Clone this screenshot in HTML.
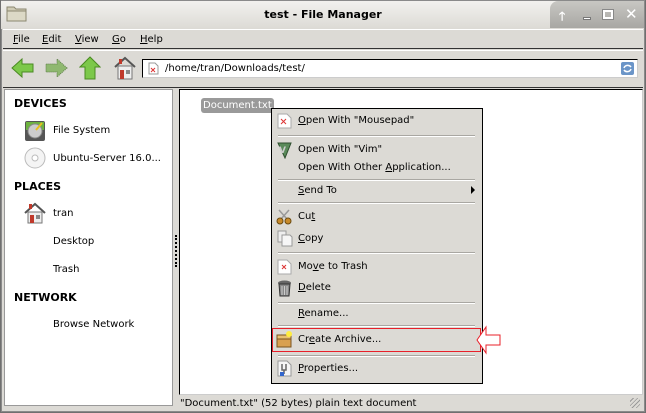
<!DOCTYPE html>
<html><head><style>
*{margin:0;padding:0;box-sizing:border-box}
body{width:646px;height:413px;background:#6f6f6f;font-family:"DejaVu Sans","Liberation Sans",sans-serif;font-size:10px;color:#000;position:relative;overflow:hidden}
.a{position:absolute}
u{text-decoration:underline}
.win{left:1px;top:0;width:644px;height:412px;background:#dcdad5;border:1px solid #8a8a8a}
.title{left:1px;top:1px;width:643px;height:28px;background:linear-gradient(#f2f1ee,#dcdad5)}
.sep{left:278px;width:197px;height:2px;border-top:1px solid #a9a7a2;border-bottom:1px solid #fff}
.it{left:298px;white-space:nowrap}
</style></head><body>
<div class="a win"></div>
<div class="a title"></div>
<svg class="a" style="left:6px;top:4px" width="22" height="18"><path d="M1 3h7l2 2h10v12H1z" fill="#cfcbb5" stroke="#8b8770"/><path d="M1 7h19v10H1z" fill="#dcd9c6" stroke="#8b8770"/></svg>
<div class="a" style="left:0;width:646px;top:8px;text-align:center;font-weight:bold;font-size:11px">test - File Manager</div>
<div class="a" style="left:550px;top:1px;width:94px;height:27px;background:linear-gradient(#c8c7c3,#a8a7a3);border-radius:8px 0 0 0"></div>
<div class="a" style="left:559px;top:7px;font-size:12px;font-weight:bold;color:#fff">🡑</div>
<div class="a" style="left:583px;top:17px;width:8px;height:3px;background:#fff;border:1px solid #777"></div>
<div class="a" style="left:603px;top:10px;width:10px;height:9px;border:2px solid #fff;outline:1px solid #888"></div>
<div class="a" style="left:625px;top:5px;font-size:15px;color:#fff">✕</div>
<div class="a" style="left:3px;top:29px;width:640px;height:20px;border-top:1px solid #fff;border-bottom:1px solid #333"></div>
<div class="a" style="left:13px;top:34px"><u>F</u>ile</div>
<div class="a" style="left:42px;top:34px"><u>E</u>dit</div>
<div class="a" style="left:75px;top:34px"><u>V</u>iew</div>
<div class="a" style="left:112px;top:34px"><u>G</u>o</div>
<div class="a" style="left:140px;top:34px"><u>H</u>elp</div>
<div class="a" style="left:3px;top:50px;width:640px;height:38px;border-top:1px solid #fff;border-bottom:1px solid #333"></div>
<svg class="a" style="left:11px;top:57px" width="24" height="22"><path d="M1 11L11 2v5h11v8H11v5z" fill="#7cc84a" stroke="#4a8a22"/></svg>
<svg class="a" style="left:44px;top:57px" width="24" height="22"><path d="M23 11L13 2v5H2v8h11v5z" fill="#8fb870" stroke="#5f7f4a" stroke-dasharray="1 1"/></svg>
<svg class="a" style="left:79px;top:56px" width="22" height="24"><path d="M11 1L1 11h5v12h10V11h5z" fill="#7cc84a" stroke="#4a8a22"/></svg>
<svg class="a" style="left:113px;top:56px" width="24" height="24"><path d="M2 11L12 2l10 9" fill="none" stroke="#555" stroke-width="2"/><path d="M5 10h14v13H5z" fill="#eee" stroke="#777"/><rect x="7" y="14" width="4" height="9" fill="#c0392b"/><rect x="13" y="14" width="4" height="4" fill="#888"/><rect x="6" y="3" width="3" height="5" fill="#c0392b"/></svg>
<div class="a" style="left:142px;top:59px;width:496px;height:19px;background:#fff;border:1px solid #000;border-bottom-color:#ccc;border-right-color:#ccc"></div>
<svg class="a" style="left:148px;top:62px" width="11" height="13"><path d="M1 1h6l3 3v8H1z" fill="#fff" stroke="#999"/><path d="M3 6l4 4M7 6l-4 4" stroke="#d33"/></svg>
<div class="a" style="left:165px;top:63px">/home/tran/Downloads/test/</div>
<svg class="a" style="left:621px;top:62px" width="13" height="13"><rect x="0" y="0" width="13" height="13" rx="2" fill="#6b95c8"/><path d="M3 6a4 4 0 0 1 7-1M10 7a4 4 0 0 1-7 1" stroke="#fff" fill="none" stroke-width="1.5"/></svg>
<div class="a" style="left:4px;top:89px;width:169px;height:317px;background:#fff;border:1px solid #999"></div>
<div class="a" style="left:14px;top:97px;font-weight:bold;font-size:11px">DEVICES</div>
<svg class="a" style="left:24px;top:120px" width="22" height="22"><rect x="1" y="1" width="20" height="20" rx="2" fill="#555"/><rect x="2" y="2" width="18" height="8" fill="#6db33f"/><circle cx="11" cy="11" r="7" fill="#ccc" stroke="#888"/><path d="M12 10l6-7" stroke="#e8c020" stroke-width="2"/></svg>
<div class="a" style="left:53px;top:125px">File System</div>
<svg class="a" style="left:24px;top:147px" width="22" height="22"><circle cx="11" cy="11" r="10" fill="#f4f4f4" stroke="#bbb"/><circle cx="11" cy="11" r="3" fill="#fff" stroke="#bbb"/></svg>
<div class="a" style="left:53px;top:153px">Ubuntu-Server 16.0...</div>
<div class="a" style="left:14px;top:180px;font-weight:bold;font-size:11px">PLACES</div>
<svg class="a" style="left:24px;top:202px" width="22" height="22"><path d="M1 11L11 2l10 9" fill="none" stroke="#555" stroke-width="2"/><path d="M4 10h14v11H4z" fill="#eee" stroke="#777"/><rect x="6" y="13" width="4" height="8" fill="#c0392b"/><rect x="12" y="13" width="4" height="4" fill="#888"/><rect x="5" y="2" width="3" height="5" fill="#c0392b"/></svg>
<div class="a" style="left:53px;top:208px">tran</div>
<div class="a" style="left:53px;top:236px">Desktop</div>
<div class="a" style="left:53px;top:264px">Trash</div>
<div class="a" style="left:14px;top:291px;font-weight:bold;font-size:11px">NETWORK</div>
<div class="a" style="left:53px;top:319px">Browse Network</div>
<div class="a" style="left:175px;top:235px;width:2px;height:32px;border-left:2px dotted #000"></div>
<div class="a" style="left:179px;top:89px;width:464px;height:306px;background:#fff;border:1px solid #000;border-right-color:#ccc;border-bottom-color:#ccc"></div>
<div class="a" style="left:201px;top:98px;padding:0 2px;height:15px;background:#9a9a9a;color:#fff;border-radius:3px;line-height:15px">Document.txt</div>
<div class="a" style="left:180px;top:398px">"Document.txt" (52 bytes) plain text document</div>
<div class="a" style="left:630px;top:398px;width:10px;height:10px;background:repeating-linear-gradient(135deg,transparent 0 2px,#999 2px 3px)"></div>
<div class="a" style="left:271px;top:108px;width:212px;height:276px;background:#dcdad5;border:1px solid #000"></div>
<svg class="a" style="left:277px;top:113px" width="15" height="16"><path d="M1 1h9l4 4v10H1z" fill="#fff" stroke="#aaa"/><path d="M4 6l5 5M9 6l-5 5" stroke="#d33"/></svg>
<div class="a it" style="top:115px"><u>O</u>pen With "Mousepad"</div>
<div class="a sep" style="top:135px"></div>
<svg class="a" style="left:276px;top:142px" width="17" height="17"><path d="M2 1h13L9 16z" fill="#5a8a5a" stroke="#2f4f2f"/><text x="3" y="11" font-size="9" fill="#ccc" font-weight="bold">V</text></svg>
<div class="a it" style="top:144px">Open With "Vim"</div>
<div class="a it" style="top:162px">Open With Other <u>A</u>pplication...</div>
<div class="a sep" style="top:179px"></div>
<div class="a it" style="top:185px"><u>S</u>end To</div>
<div class="a" style="left:471px;top:186px;width:0;height:0;border-left:4px solid #000;border-top:4px solid transparent;border-bottom:4px solid transparent"></div>
<div class="a sep" style="top:202px"></div>
<svg class="a" style="left:276px;top:209px" width="16" height="16"><path d="M3 1l8 9M13 1L5 10" stroke="#999" stroke-width="1.5"/><circle cx="4" cy="12" r="3" fill="#c88a2a" stroke="#6b4a10"/><circle cx="12" cy="12" r="3" fill="#c88a2a" stroke="#6b4a10"/></svg>
<div class="a it" style="top:211px">Cu<u>t</u></div>
<svg class="a" style="left:277px;top:230px" width="16" height="17"><path d="M1 1h8v11H1z" fill="#eee" stroke="#999"/><path d="M5 5h8l2 2v9H5z" fill="#f6f6f6" stroke="#999"/></svg>
<div class="a it" style="top:233px"><u>C</u>opy</div>
<div class="a sep" style="top:252px"></div>
<svg class="a" style="left:277px;top:259px" width="15" height="16"><path d="M1 1h9l4 4v10H1z" fill="#fff" stroke="#aaa"/><path d="M5 6l4 4M9 6l-4 4" stroke="#d33"/></svg>
<div class="a it" style="top:261px">Mo<u>v</u>e to Trash</div>
<svg class="a" style="left:277px;top:280px" width="15" height="17"><ellipse cx="7.5" cy="3" rx="6.5" ry="2.5" fill="#666"/><path d="M2 4h11l-1 12H3z" fill="#888" stroke="#333"/><path d="M5 6v9M7.5 6v9M10 6v9" stroke="#ccc"/></svg>
<div class="a it" style="top:282px"><u>D</u>elete</div>
<div class="a sep" style="top:302px"></div>
<div class="a it" style="top:308px"><u>R</u>ename...</div>
<div class="a sep" style="top:325px"></div>
<div class="a" style="left:272px;top:328px;width:209px;height:24px;border:1px solid #e8202a"></div>
<svg class="a" style="left:276px;top:331px" width="17" height="17"><rect x="1" y="4" width="14" height="12" fill="#d9a050" stroke="#7a5420"/><rect x="1" y="4" width="14" height="4" fill="#e8c070" stroke="#7a5420"/><circle cx="13" cy="3" r="3" fill="#ffee40"/></svg>
<div class="a it" style="top:334px">Cr<u>e</u>ate Archive...</div>
<div class="a sep" style="top:355px"></div>
<svg class="a" style="left:277px;top:360px" width="15" height="17"><path d="M1 1h9l4 4v11H1z" fill="#f6f6f6" stroke="#999"/><path d="M5 4v6h4V4M7 10v4" stroke="#666" fill="none" stroke-width="1.5"/><rect x="3" y="12" width="4" height="4" fill="#36c"/></svg>
<div class="a it" style="top:363px"><u>P</u>roperties...</div>
<svg class="a" style="left:476px;top:325px" width="26" height="30"><path d="M1 15L10 2v8h14v10H10v8z" fill="#fff" stroke="#e8202a"/></svg>
</body></html>
